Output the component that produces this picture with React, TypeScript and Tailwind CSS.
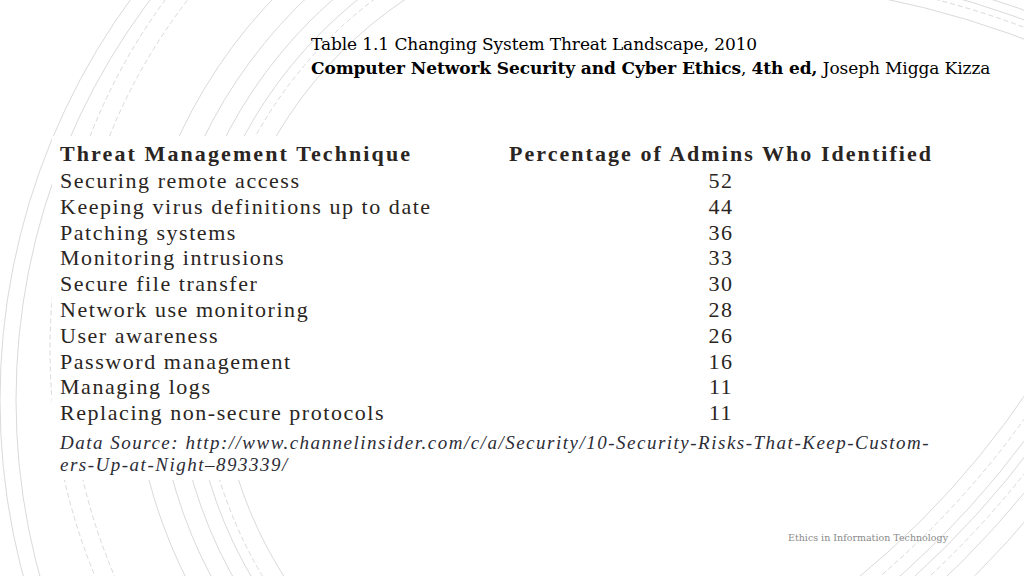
import React from "react";

const rows: [string, string][] = [
  ["Securing remote access", "52"],
  ["Keeping virus definitions up to date", "44"],
  ["Patching systems", "36"],
  ["Monitoring intrusions", "33"],
  ["Secure file transfer", "30"],
  ["Network use monitoring", "28"],
  ["User awareness", "26"],
  ["Password management", "16"],
  ["Managing logs", "11"],
  ["Replacing non-secure protocols", "11"],
];

type Arc = { cx: number; cy: number; r: number; dashed?: boolean; clip: string };

const arcs: Arc[] = [
  // big left swoosh
  { cx: 680, cy: 400, r: 680, clip: "left" },
  { cx: 680, cy: 400, r: 664, clip: "left" },
  { cx: 640, cy: 350, r: 590, dashed: true, clip: "left" },
  { cx: 640, cy: 350, r: 572, dashed: true, clip: "left" },
  { cx: 640, cy: 350, r: 508, clip: "left" },
  { cx: 640, cy: 350, r: 485, clip: "left" },
  { cx: 640, cy: 350, r: 466, clip: "left" },
  { cx: 640, cy: 350, r: 450, clip: "left" },
  { cx: 640, cy: 350, r: 440, dashed: true, clip: "left" },
  { cx: 640, cy: 350, r: 422, clip: "left" },
  // top-right
  { cx: 700, cy: 900, r: 920, clip: "right" },
  { cx: 700, cy: 900, r: 931, dashed: true, clip: "right" },
  { cx: 700, cy: 900, r: 938, clip: "right" },
  { cx: 700, cy: 900, r: 947, clip: "right" },
  // bottom-right
  { cx: 300, cy: -100, r: 878, clip: "right" },
  { cx: 300, cy: -100, r: 891, dashed: true, clip: "right" },
  { cx: 300, cy: -100, r: 904, clip: "right" },
  { cx: 300, cy: -100, r: 914, clip: "right" },
  { cx: 300, cy: -100, r: 924, dashed: true, clip: "right" },
  { cx: 300, cy: -100, r: 936, clip: "right" },
  { cx: 300, cy: -100, r: 955, clip: "right" },
];

export default function App() {
  return (
    <div className="relative w-[1024px] h-[576px] overflow-hidden bg-white">
      <svg
        className="absolute inset-0"
        width="1024"
        height="576"
        viewBox="0 0 1024 576"
        fill="none"
      >
        <defs>
          <clipPath id="clip-left">
            <rect x="0" y="0" width="470" height="576" />
          </clipPath>
          <clipPath id="clip-right">
            <rect x="820" y="0" width="204" height="576" />
          </clipPath>
        </defs>
        {arcs.map((a, i) => (
          <circle
            key={i}
            cx={a.cx}
            cy={a.cy}
            r={a.r}
            stroke="#cfcfcf"
            strokeWidth={0.8}
            strokeDasharray={a.dashed ? "5 3" : undefined}
            clipPath={`url(#clip-${a.clip})`}
          />
        ))}
      </svg>

      <div className="relative flex flex-col h-full">
        <header className="pl-[311px] pt-[32px] font-['DejaVu_Serif',serif] text-[17px] leading-[24px] text-black tracking-[-0.1px]">
          <p>Table 1.1 Changing System Threat Landscape, 2010</p>
          <p>
            <span className="font-bold">Computer Network Security and Cyber Ethics</span>,{" "}
            <span className="font-bold">4th ed,</span> Joseph Migga Kizza
          </p>
        </header>

        <section className="ml-[52px] mt-[56px] w-[900px] h-[344px] bg-white pl-[8px] pt-[4px] font-['Liberation_Serif',serif] text-[#2a2522]">
          <div className="grid grid-cols-[448px_426px]">
            <div className="font-bold text-[22px] leading-[28px] tracking-[2.1px]">
              Threat Management Technique
            </div>
            <div className="font-bold text-[22px] leading-[28px] tracking-[2.05px] text-center">
              Percentage of Admins Who Identified
            </div>
            {rows.map(([label, value]) => (
              <React.Fragment key={label}>
                <div className="text-[22px] leading-[25.8px] tracking-[1.55px]">{label}</div>
                <div className="text-[22px] leading-[25.8px] tracking-[1.5px] text-center">{value}</div>
              </React.Fragment>
            ))}
          </div>
          <p className="mt-[6px] italic text-[19px] leading-[22px] tracking-[1.5px] text-[#2c2c36] whitespace-nowrap">
            Data Source: http://www.channelinsider.com/c/a/Security/10-Security-Risks-That-Keep-Custom-
            <br />
            ers-Up-at-Night–893339/
          </p>
        </section>

        <footer className="mt-auto mb-[32px] pl-[788px] font-['DejaVu_Serif',serif] text-[9.5px] leading-[12px] text-[#8a8a8a]">
          Ethics in Information Technology
        </footer>
      </div>
    </div>
  );
}
